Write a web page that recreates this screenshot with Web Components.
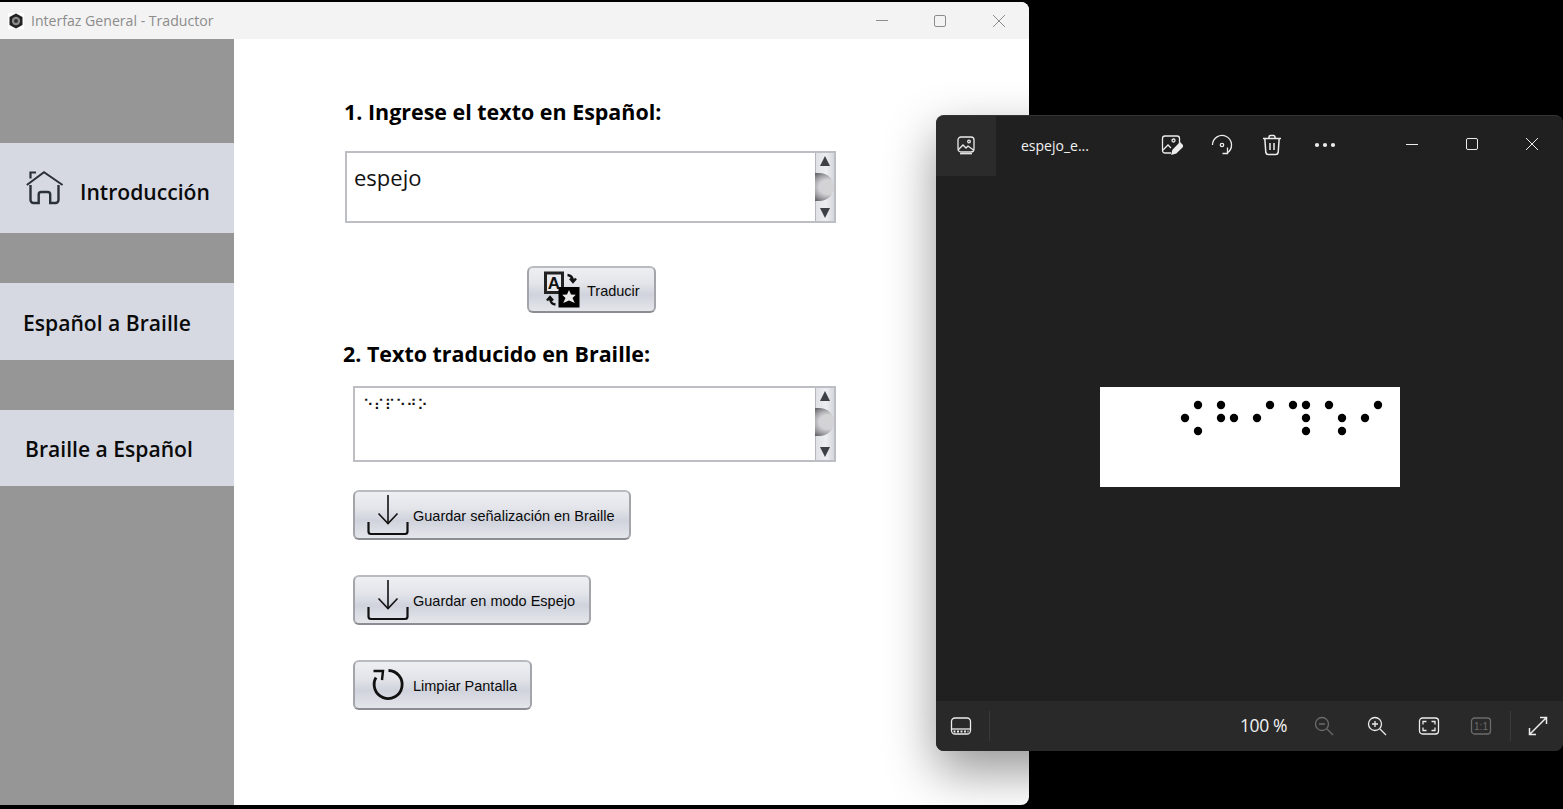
<!DOCTYPE html>
<html lang="es">
<head>
<meta charset="utf-8">
<title>Interfaz General - Traductor</title>
<style>
  html, body { margin: 0; height: 100%; background: #000; overflow: hidden; }
</style>
</head>
<body>

<translator-window heading="Interfaz General - Traductor">
  <side-nav slot="side">
    <nav-item style="height:90px;margin-top:104px;padding-left:26px;--label-shift:6px" gap="18">
      <svg slot="icon" width="38" height="36" viewBox="0 0 38 36" fill="none" stroke="#2b3138" stroke-width="2.4"><path d="M.8 15 18 2.2 36.6 15" stroke-width="2"/><path d="M4.500 8.500V2.500h5.500" stroke-width="2.200"/><path d="M4.500 15V30a3 3 0 0 0 3 3h5.200V24.500a2.500 2.500 0 0 1 2.500-2.500h6.500a2.500 2.500 0 0 1 2.500 2.500V33h5.300a3 3 0 0 0 3-3V15"/></svg>
      Introducción
    </nav-item>
    <nav-item style="height:77px;margin-top:50px;padding-left:23px;--label-shift:2px">Español a Braille</nav-item>
    <nav-item style="height:76px;margin-top:50px;padding-left:25px;--label-shift:0px">Braille a Español</nav-item>
  </side-nav>
  <translate-form></translate-form>
</translator-window>

<photo-viewer filename="espejo_e..."></photo-viewer>

<script>
  const DOWNLOAD_ICON = `<svg slot="icon" width="42" height="42" viewBox="0 0 42 42" fill="none" stroke="#111"><path d="M21 1v29" stroke-width="1.600"/><path d="M11.500 19.500 21 29.500l9.500-10" stroke-width="1.600"/><path d="M1.500 28v9.500q0 2.500 2.500 2.500h34q2.500 0 2.500-2.500V28" stroke-width="2.200"/></svg>`;

  class TranslatorWindow extends HTMLElement {
    constructor() {
      super();
      this.attachShadow({ mode: 'open' });
    }
    connectedCallback() {
      this.shadowRoot.innerHTML = `
      <style>
        :host {
          position: absolute; left: 0; top: 2px; width: 1029px; height: 803px;
          display: flex; flex-direction: column;
          background: #fff; border-radius: 0 8px 8px 0; overflow: hidden;
        }
        .titlebar { height: 37px; flex: none; display: flex; align-items: center; background: #f3f3f3; padding-right: 1px; }
        .logo { margin-left: 8px; width: 16px; height: 16px; flex: none; }
        .name { margin-left: 7px; flex: 1; font: 14.100px "Open Sans", "Noto Sans", sans-serif; color: #8b8b8b; }
        .ctl { width: 59px; height: 37px; display: flex; align-items: center; justify-content: center; }
        .body { flex: 1; display: flex; min-height: 0; }
      </style>
      <div class="titlebar">
        <svg class="logo" viewBox="0 0 16 16"><rect width="16" height="16" fill="#fff"/><path d="M8 0.500 14.500 4v8L8 15.500 1.500 12V4z" fill="#222"/><circle cx="8" cy="8" r="4.200" fill="#8a8a8a"/><circle cx="8" cy="8" r="2" fill="#333"/></svg>
        <span class="name">${this.getAttribute('heading')}</span>
        <span class="ctl"><svg width="14" height="14" viewBox="0 0 14 14" stroke="#8c8c8c" fill="none"><path d="M2 6.500h12"/></svg></span>
        <span class="ctl"><svg width="14" height="14" viewBox="0 0 14 14" stroke="#8c8c8c" fill="none"><rect x="1.500" y="1.500" width="11" height="11" rx="1.500"/></svg></span>
        <span class="ctl"><svg width="14" height="14" viewBox="0 0 14 14" stroke="#8c8c8c" fill="none"><path d="M1 1l12 12M13 1 1 13"/></svg></span>
      </div>
      <div class="body"><slot name="side"></slot><slot></slot></div>`;
    }
  }
  customElements.define('translator-window', TranslatorWindow);

  class SideNav extends HTMLElement {
    constructor() {
      super();
      this.attachShadow({ mode: 'open' }).innerHTML = `
      <style>
        :host { display: flex; flex-direction: column; width: 234px; flex: none; background: #969696; }
      </style>
      <slot></slot>`;
    }
  }
  customElements.define('side-nav', SideNav);

  class NavItem extends HTMLElement {
    constructor() {
      super();
      this.attachShadow({ mode: 'open' });
    }
    connectedCallback() {
      const gap = this.getAttribute('gap') || 0;
      this.shadowRoot.innerHTML = `
      <style>
        :host {
          display: flex; align-items: center; box-sizing: border-box; flex: none;
          background: #d6d9e2; color: #0a0a0a;
          font: 600 21.100px "Open Sans", "Noto Sans", sans-serif;
        }
        .label { margin-left: ${gap ? gap - 2 : 0}px; margin-top: var(--label-shift, 0); }
        ::slotted(svg) { flex: none; }
      </style>
      <slot name="icon"></slot><span class="label"><slot></slot></span>`;
    }
  }
  customElements.define('nav-item', NavItem);

  class TextBox extends HTMLElement {
    constructor() {
      super();
      this.attachShadow({ mode: 'open' }).innerHTML = `
      <style>
        :host {
          display: flex; box-sizing: border-box;
          border: 2px solid #bcbec4; background: #fff;
        }
        .value { flex: 1; min-width: 0; }
        .bar {
          width: 19px; flex: none; display: flex; flex-direction: column; align-items: center;
          box-sizing: border-box; border-left: 1px solid #b4b7bd; padding: 3px 0;
          background: linear-gradient(90deg, #dfe1e6, #eceef1 55%, #d5d7dd);
        }
        .up, .down { width: 0; height: 0; border-left: 5px solid transparent; border-right: 5px solid transparent; }
        .up { border-bottom: 10px solid #3d4046; }
        .down { border-top: 10px solid #3d4046; margin-top: auto; }
        .thumb {
          align-self: stretch; height: 28px; margin: 7px 0 0 -1px;
          border-radius: 0 15px 15px 0 / 0 14px 14px 0;
          background: radial-gradient(ellipse 23px 19px at 68% 50%, #d3d3d6 38%, #a4a4a8 62%, #47484c 100%);
        }
      </style>
      <div class="value"><slot></slot></div>
      <div class="bar"><span class="up"></span><span class="thumb"></span><span class="down"></span></div>`;
    }
  }
  customElements.define('text-box', TextBox);

  class GlossButton extends HTMLElement {
    constructor() {
      super();
      this.attachShadow({ mode: 'open' }).innerHTML = `
      <style>
        :host {
          display: flex; align-items: center; box-sizing: border-box;
          border: 2px solid #a3a5ab; border-top-color: #b9bbc0; border-bottom-color: #8b8d93; border-radius: 6px;
          background: linear-gradient(#eeeff3, #e3e5ea 35%, #d0d3dc 62%, #e4e6eb);
          color: #0a0a0a; font: 14.500px "Liberation Sans", Arial, sans-serif;
          white-space: nowrap;
        }
        .label { padding-top: 2px; }
        ::slotted(svg) { flex: none; }
      </style>
      <slot name="icon"></slot><span class="label"><slot></slot></span>`;
    }
  }
  customElements.define('gloss-button', GlossButton);

  class TranslateForm extends HTMLElement {
    constructor() {
      super();
      this.attachShadow({ mode: 'open' }).innerHTML = `
      <style>
        :host { display: flex; flex-direction: column; flex: 1; box-sizing: border-box; padding: 59px 0 0 110px; font-family: "Open Sans", "Noto Sans", sans-serif; }
        h2 { margin: 0; font-size: 21.450px; line-height: 30px; font-weight: 700; color: #000; white-space: nowrap; position: relative; top: -1px; }
        .box1 { width: 491px; height: 72px; margin: 23px 0 0 1px; }
        .box1 .typed { padding: 9px 0 0 7px; font-size: 22px; line-height: 30px; color: #111; }
        .h2b { margin: 27px 0 0 -1px; }
        .box2 { width: 483px; height: 76px; margin: 16px 0 0 9px; }
        .cells { padding: 7px 0 0 8px; font: 14.800px/20px "DejaVu Sans", sans-serif; color: #111; }
        .translate { width: 129px; height: 47px; margin: 43px 0 0 183px; }
        .translate svg { margin: -1px 7px 0 15px; }
        .save1 { width: 278px; height: 50px; margin-top: 28px; margin-left: 9px; }
        .save2 { width: 238px; height: 50px; margin-top: 35px; margin-left: 9px; }
        .clear { width: 179px; height: 50px; margin-top: 35px; margin-left: 9px; }
        .save1 svg, .save2 svg { margin: 0 4px 0 12px; }
        .clear svg { margin: 0 8px 0 16px; }
      </style>
      <h2>1. Ingrese el texto en Español:</h2>
      <text-box class="box1"><div class="typed">espejo</div></text-box>
      <gloss-button class="translate">
        <svg slot="icon" width="36" height="37" viewBox="0 0 36 37">
          <rect x="1.500" y="2" width="17" height="19.500" fill="#e8e9ed" stroke="#222" stroke-width="3"/>
          <text x="10" y="17.500" text-anchor="middle" font-family="Liberation Sans" font-weight="700" font-size="17" fill="#111">A</text>
          <rect x="14.500" y="16" width="21" height="20.500" fill="#000"/>
          <path d="m25 19 2 4.500 4.800.3-3.300 3.200 2.300 5-5.800-2.600-5.800 2.600 2.300-5-3.300-3.200 4.800-.3z" fill="#e9e9e9"/>
          <path d="M23.500 4q5 .5 5.500 6M26 7.500l3 3.500 3-3.500" fill="none" stroke="#111" stroke-width="2.400"/>
          <path d="M11.500 33.500q-5-.5-5.500-6M3 29.500 6 26l3 3.500" fill="none" stroke="#111" stroke-width="2.400"/>
        </svg>
        Traducir
      </gloss-button>
      <h2 class="h2b">2. Texto traducido en Braille:</h2>
      <text-box class="box2"><div class="cells">⠑⠎⠏⠑⠚⠕</div></text-box>
      <gloss-button class="save1">${DOWNLOAD_ICON}Guardar señalización en Braille</gloss-button>
      <gloss-button class="save2">${DOWNLOAD_ICON}Guardar en modo Espejo</gloss-button>
      <gloss-button class="clear">
        <svg slot="icon" width="34" height="36" viewBox="0 0 34 36" fill="none" stroke="#111" stroke-width="2.800">
          <path d="M17.500 3.500A14 14 0 1 1 5 10.500"/>
          <path d="M2.500 4h9.500l-1 9" stroke-width="2.400"/>
        </svg>
        Limpiar Pantalla
      </gloss-button>`;
    }
  }
  customElements.define('translate-form', TranslateForm);

  class BrailleImage extends HTMLElement {
    constructor() {
      super();
      const dots = [[85,31],[98,18],[98,44],[121,18],[121,31],[134,31],[157,31],[170,18],[193,18],[206,18],[206,31],[206,44],[229,18],[242,31],[242,44],[265,31],[278,18]];
      this.attachShadow({ mode: 'open' }).innerHTML = `
      <style>:host { display: block; width: 300px; height: 100px; background: #fff; } svg { display: block; }</style>
      <svg width="300" height="100" viewBox="0 0 300 100">${dots.map(([x, y]) => `<circle cx="${x}" cy="${y}" r="4.200"/>`).join('')}</svg>`;
    }
  }
  customElements.define('braille-image', BrailleImage);

  class PhotoViewer extends HTMLElement {
    constructor() {
      super();
      this.attachShadow({ mode: 'open' });
    }
    connectedCallback() {
      this.shadowRoot.innerHTML = `
      <style>
        :host {
          position: absolute; left: 936px; top: 115px; width: 627px; height: 636px;
          display: flex; flex-direction: column; box-sizing: border-box;
          background: #202020; border-top: 1px solid #333; border-radius: 8px;
          box-shadow: 0 20px 50px rgba(0,0,0,.42);
          font-family: "Open Sans", "Noto Sans", sans-serif; color: #f2f2f2;
        }
        svg { display: block; fill: none; stroke: #ececec; stroke-width: 1.300; }
        .top { height: 60px; flex: none; display: flex; align-items: center; box-sizing: border-box; padding-bottom: 2px; }
        .tab { width: 60px; height: 60px; align-self: flex-start; display: flex; align-items: center; justify-content: center; background: #2b2b2b; border-radius: 8px 0 0 0; padding-bottom: 3px; box-sizing: border-box; }
        .file { width: 126px; padding-left: 25px; font-size: 14px; }
        .act { width: 50px; display: flex; justify-content: center; }
        .win { width: 60px; display: flex; justify-content: center; margin-top: -2px; }
        .gap { flex: 1; }
        .stage { flex: 1; display: flex; align-items: center; justify-content: center; min-height: 0; padding-bottom: 3px; }
        .bottom { height: 50px; flex: none; display: flex; align-items: center; background: #292929; border-radius: 0 0 8px 8px; }
        .sep { width: 1px; height: 30px; background: #3a3a3a; }
        .strip { width: 53px; padding-right: 4px; box-sizing: border-box; display: flex; justify-content: center; }
        .zoom { font-size: 17.500px; letter-spacing: -.4px; margin-top: -2px; }
        .tool { width: 52px; display: flex; justify-content: center; }
        .dim svg { stroke: #6b6b6b; }
      </style>
      <div class="top">
        <span class="tab"><svg width="20" height="20" viewBox="0 0 20 20"><rect x="2" y="2" width="16" height="15" rx="3"/><path d="M2.500 14.500 7 10l3 3 2-2 5.500 4"/><circle cx="13" cy="6.500" r="1.300"/><path d="M4 18.700h12"/></svg></span>
        <span class="file">${this.getAttribute('filename')}</span>
        <span class="act"><svg width="22" height="22" viewBox="0 0 22 22"><path d="M10 19H4a2.500 2.500 0 0 1-2.500-2.500v-12A2.500 2.500 0 0 1 4 2h12a2.500 2.500 0 0 1 2.500 2.500V10"/><path d="M2 16l5-5 3 3"/><circle cx="12.500" cy="6.500" r="1.500"/><path d="M11 20l1-4 7-7 3 3-7 7z" fill="#ececec"/></svg></span>
        <span class="act"><svg width="22" height="22" viewBox="0 0 22 22"><path d="M1.500 11A9.500 9.500 0 1 1 16.500 18.700"/><path d="M16.500 13.500V19.500H11.500"/><circle cx="11" cy="11" r="1.700"/></svg></span>
        <span class="act"><svg width="22" height="22" viewBox="0 0 22 22"><path d="M2 4.500h18M8 4.500V3a1.500 1.500 0 0 1 1.500-1.500h3A1.500 1.500 0 0 1 14 3v1.500M3.800 4.500l1 14a2.500 2.500 0 0 0 2.500 2h7.400a2.500 2.500 0 0 0 2.500-2l1-14M9 9v7M13 9v7" stroke-width="1.500"/></svg></span>
        <span class="act" style="margin-left:3px"><svg width="22" height="6" viewBox="0 0 22 6"><g fill="#ececec" stroke="none"><circle cx="3" cy="3" r="2.100"/><circle cx="11" cy="3" r="2.100"/><circle cx="19" cy="3" r="2.100"/></g></svg></span>
        <span class="gap"></span>
        <span class="win"><svg width="14" height="14" viewBox="0 0 14 14" style="stroke-width:1"><path d="M1 7.500h12"/></svg></span>
        <span class="win"><svg width="14" height="14" viewBox="0 0 14 14" style="stroke-width:1"><rect x="1.500" y="1.500" width="11" height="11" rx="1.500"/></svg></span>
        <span class="win" style="margin-right:1px"><svg width="14" height="14" viewBox="0 0 14 14" style="stroke-width:1"><path d="M1 1l12 12M13 1 1 13"/></svg></span>
      </div>
      <div class="stage"><braille-image></braille-image></div>
      <div class="bottom">
        <span class="strip"><svg width="22" height="18" viewBox="0 0 22 18"><rect x="1.500" y="1" width="19" height="16" rx="3.500"/><path d="M1.500 12h19"/><path d="M3.500 14.500h15" stroke-dasharray="2 1.500" stroke-width="1.800"/></svg></span>
        <span class="sep"></span>
        <span class="gap"></span>
        <span class="zoom">100 %</span>
        <span class="tool dim" style="margin-left:11px"><svg width="20" height="20" viewBox="0 0 20 20"><circle cx="8" cy="8" r="6.500"/><path d="M5 8h6M13 13l6 6"/></svg></span>
        <span class="tool" style="margin-left:1px"><svg width="20" height="20" viewBox="0 0 20 20"><circle cx="8" cy="8" r="6.500"/><path d="M5 8h6M8 5v6M13 13l6 6"/></svg></span>
        <span class="tool"><svg width="22" height="18" viewBox="0 0 22 18"><rect x="1.500" y="1" width="19" height="16" rx="3"/><path d="M5 7.500V4.500H8.500M13.500 4.500H17V7.500M17 10.500V13.500H13.500M8.500 13.500H5V10.500"/></svg></span>
        <span class="tool dim"><svg width="22" height="18" viewBox="0 0 22 18"><rect x="1.500" y="1" width="19" height="16" rx="3"/><text x="11" y="13" text-anchor="middle" font-family="Liberation Sans" font-size="10" fill="#6b6b6b" stroke="none">1:1</text></svg></span>
        <span class="sep" style="margin-left:3px"></span>
        <span class="tool" style="width:50px;margin-left:2px"><svg width="20" height="20" viewBox="0 0 20 20" style="stroke-width:1.500"><path d="M12 1.500h6.500V8M18.500 1.500l-17 17M1.500 12v6.500H8"/></svg></span>
      </div>`;
    }
  }
  customElements.define('photo-viewer', PhotoViewer);
</script>
</body>
</html>
